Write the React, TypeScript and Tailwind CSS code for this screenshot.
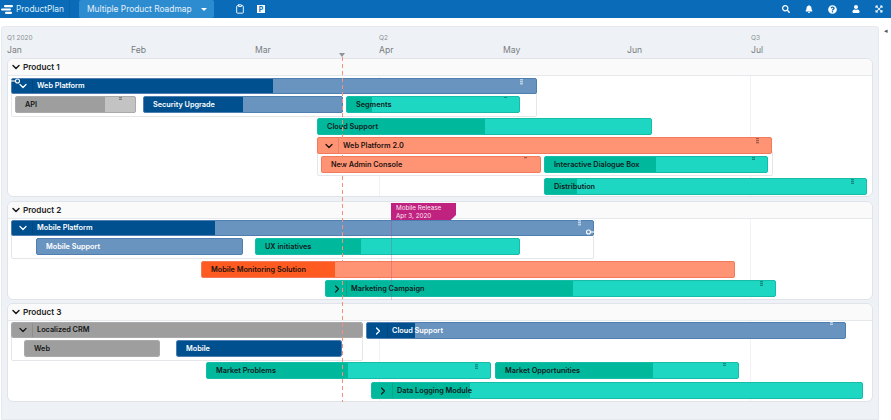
import { ChevronDown, ChevronRight, Clipboard } from "lucide-react";
import { FaBell, FaExpandArrowsAlt, FaQuestionCircle, FaSearch, FaUser } from "react-icons/fa";

type Tone = "navy" | "teal" | "orange" | "gray" | "mist";
type Toggle = "down" | "right";

interface BarData {
  label: string;
  from: number;
  to: number;
  top: number;
  height?: number;
  split?: number;
  tone: Tone;
  toggle?: Toggle;
}

interface GroupBox {
  from: number;
  to: number;
  top: number;
  bottom: number;
}

interface Grip {
  x: number;
  y: number;
  h: number;
  dark?: boolean;
}

const tones: Record<Tone, { light: string; dark: string; border: string; text: string }> = {
  navy: { light: "bg-[#6a94c0]", dark: "bg-[#00508f]", border: "border-[#4f7fb0]", text: "text-white" },
  mist: { light: "bg-[#6a94c0]", dark: "bg-[#6a94c0]", border: "border-[#4f7fb0]", text: "text-white" },
  teal: { light: "bg-[#1dd7c3]", dark: "bg-[#00b89c]", border: "border-[#15bda9]", text: "text-[#10201d]" },
  orange: { light: "bg-[#ff9474]", dark: "bg-[#ff5a1f]", border: "border-[#f4795a]", text: "text-[#1c1310]" },
  gray: { light: "bg-[#c3c3c3]", dark: "bg-[#9e9e9e]", border: "border-[#a9a9a9]", text: "text-[#161616]" },
};

const months = ["Jan", "Feb", "Mar", "Apr", "May", "Jun", "Jul"];
const quarters = ["Q1 2020", "", "", "Q2", "", "", "Q3"];

const Bar = ({ bar, originX, originY }: { bar: BarData; originX: number; originY: number }) => {
  const tone = tones[bar.tone];
  const height = bar.height ?? 17;
  const width = bar.to - bar.from;
  return (
    <div
      className={`absolute overflow-hidden rounded-[2px] border ${tone.border} ${tone.light}`}
      style={{ left: bar.from - originX, top: bar.top - originY, width, height }}
    >
      {/* split is a page x, the fill starts inside the 1px border */}
      {bar.split && (
        <div className={`h-full ${tone.dark}`} style={{ width: bar.split - bar.from - 1 }} />
      )}
      {bar.toggle && (
        <div className="absolute top-0 left-0 flex h-full w-[21px] items-center justify-center border-r border-black/10 pl-[2px]">
          {bar.toggle === "down" ? (
            <ChevronDown size={12} strokeWidth={2.5} className={tone.text} />
          ) : (
            <ChevronRight size={12} strokeWidth={2.5} className={tone.text} />
          )}
        </div>
      )}
      <span
        className={`absolute top-0 flex h-full items-center whitespace-nowrap text-[7.3px] leading-none font-semibold ${tone.text}`}
        style={{ left: bar.toggle ? 25 : 9 }}
      >
        {bar.label}
      </span>
    </div>
  );
};

const Card = ({
  title,
  top,
  height,
  className,
  groups,
  bars,
  grips,
  children,
}: {
  title: string;
  top: number;
  height: number;
  className?: string;
  groups: GroupBox[];
  bars: BarData[];
  grips: Grip[];
  children?: React.ReactNode;
}) => {
  const originX = 8;
  const originY = top + 1;
  return (
    <section
      className={`relative rounded-[6px] border border-[#e0e4e8] bg-white ${className ?? ""}`}
      style={{ height }}
    >
      <div className="flex h-[17px] items-center gap-[1.5px] rounded-t-[6px] border-b border-[#e6e9ec] bg-[#fafafa] pl-[1.5px] text-[8.2px] leading-none font-semibold text-[#1c1c1c]">
        <ChevronDown size={12} strokeWidth={3} />
        {title}
      </div>
      <div className="absolute top-[17px] bottom-0 left-[371px] w-px bg-[#f0f2f4]" />
      <div className="absolute top-[17px] bottom-0 left-[742px] w-px bg-[#f0f2f4]" />
      {groups.map((g) => (
        <div
          key={`${g.from}-${g.top}`}
          className="absolute rounded-[2px] border border-[#e4e6e9] bg-white"
          style={{ left: g.from - originX, top: g.top - originY, width: g.to - g.from, height: g.bottom - g.top }}
        />
      ))}
      {bars.map((b) => (
        <Bar key={b.label + b.from} bar={b} originX={originX} originY={originY} />
      ))}
      {grips.map((g) => (
        <div
          key={`${g.x}-${g.y}`}
          className={`absolute w-[3px] ${
            g.dark
              ? "bg-[repeating-linear-gradient(to_bottom,rgba(0,0,0,0.35)_0,rgba(0,0,0,0.35)_1px,rgba(0,0,0,0.12)_1px,rgba(0,0,0,0.12)_2px)]"
              : "bg-[repeating-linear-gradient(to_bottom,rgba(255,255,255,0.55)_0,rgba(255,255,255,0.55)_1px,rgba(255,255,255,0.25)_1px,rgba(255,255,255,0.25)_2px)]"
          }`}
          style={{ left: g.x - originX, top: g.y - originY, height: g.h }}
        />
      ))}
      {children}
    </section>
  );
};

const KeyMark = ({ className, flip }: { className: string; flip?: boolean }) => (
  <svg width="10" height="6" viewBox="0 0 10 6" className={`absolute ${className} ${flip ? "-scale-x-100" : ""}`}>
    <circle cx="6.5" cy="3" r="2" fill="none" stroke="white" strokeWidth="1.1" />
    <path d="M0 3h4.5" stroke="white" strokeWidth="1.1" />
  </svg>
);

export default function App() {
  return (
    <div className="relative h-[420px] w-[891px] overflow-hidden bg-white font-['Inter',sans-serif]">
      <header className="flex h-[18px] items-center bg-[#0a6cb8] text-white">
        <div className="flex h-full w-[70px] items-center gap-[3px] border-r border-[#0a62a8] pl-[1px]">
          <svg width="12" height="9" viewBox="0 0 12 9" fill="white">
            <rect x="3" y="0" width="9" height="2.2" rx="1" />
            <rect x="0" y="3.4" width="10" height="2.2" rx="1" />
            <rect x="4" y="6.8" width="7" height="2.2" rx="1" />
          </svg>
          <span className="text-[8.4px] text-[#dcecf8]">ProductPlan</span>
        </div>
        <div className="ml-[9px] flex h-full w-[135px] items-center justify-between rounded-[2px] bg-[#2d8ccf] pr-[7px] pl-[8px] text-[8.4px] text-[#e3f0fa]">
          Multiple Product Roadmap
          <span className="h-0 w-0 border-x-[3px] border-t-[3px] border-x-transparent border-t-white" />
        </div>
        <Clipboard size={10} strokeWidth={2.2} className="ml-[21px]" />
        <span className="ml-[12px] flex h-[8px] w-[8px] items-center justify-center bg-white text-[7px] leading-none font-bold text-[#0a6cb8]">
          P
        </span>
        <div className="ml-auto flex items-center gap-[15px] pr-[8px]">
          <FaSearch size={8} />
          <FaBell size={8} />
          <FaQuestionCircle size={9} />
          <FaUser size={8} />
          <FaExpandArrowsAlt size={8} />
        </div>
      </header>

      <span className="absolute top-[26px] left-[884px] text-[7px] leading-[10px] text-[#555]">◂</span>

      <main className="relative mt-[8px] ml-[1px] h-[394px] w-[878px] rounded-t-[3px] border border-[#e6e9ed] bg-[#eef1f5] px-[5px]">
        <div className="grid h-[31px] grid-cols-[repeat(7,124px)] pt-[6px]">
          {months.map((m, i) => (
            <div key={m} className="flex flex-col">
              <span className="h-[10px] text-[6.5px] leading-[10px] text-[#8a8f94]">{quarters[i]}</span>
              <span className="text-[8.6px] leading-[14px] text-[#777c80]">{m}</span>
            </div>
          ))}
        </div>

        <Card
          title="Product 1"
          top={58}
          height={139}
          groups={[
            { from: 11, to: 537, top: 90, bottom: 117 },
            { from: 317, to: 773, top: 150, bottom: 176 },
          ]}
          bars={[
            { label: "Web Platform", from: 11, to: 537, top: 78, height: 16, split: 273, tone: "navy", toggle: "down" },
            { label: "API", from: 15, to: 136, top: 96, split: 105, tone: "gray" },
            { label: "Security Upgrade", from: 143, to: 343, top: 96, split: 243, tone: "navy" },
            { label: "Segments", from: 346, to: 520, top: 96, split: 372, tone: "teal" },
            { label: "Cloud Support", from: 317, to: 652, top: 118, split: 485, tone: "teal" },
            { label: "Web Platform 2.0", from: 317, to: 772, top: 137, tone: "orange", toggle: "down" },
            { label: "New Admin Console", from: 321, to: 541, top: 156, tone: "orange" },
            { label: "Interactive Dialogue Box", from: 544, to: 768, top: 156, split: 656, tone: "teal" },
            { label: "Distribution", from: 544, to: 867, top: 178, split: 577, tone: "teal" },
          ]}
          grips={[
            { x: 520, y: 79, h: 6 },
            { x: 119, y: 97, h: 3, dark: true },
            { x: 504, y: 97, h: 1, dark: true },
            { x: 524, y: 157, h: 2, dark: true },
            { x: 752, y: 157, h: 3, dark: true },
            { x: 756, y: 138, h: 6, dark: true },
            { x: 851, y: 179, h: 5, dark: true },
          ]}
        >
          <KeyMark className="top-[19px] left-[3px]" />
        </Card>

        <Card
          title="Product 2"
          top={201}
          height={99}
          className="mt-[4px]"
          groups={[{ from: 11, to: 594, top: 232, bottom: 259 }]}
          bars={[
            { label: "Mobile Platform", from: 11, to: 594, top: 220, height: 16, split: 215, tone: "navy", toggle: "down" },
            { label: "Mobile Support", from: 36, to: 243, top: 238, tone: "mist" },
            { label: "UX initiatives", from: 255, to: 520, top: 238, split: 361, tone: "teal" },
            { label: "Mobile Monitoring Solution", from: 201, to: 735, top: 261, split: 335, tone: "orange" },
            { label: "Marketing Campaign", from: 325, to: 776, top: 280, split: 573, tone: "teal", toggle: "right" },
          ]}
          grips={[
            { x: 578, y: 220, h: 6 },
            { x: 760, y: 281, h: 5, dark: true },
          ]}
        >
          <KeyMark className="top-[27px] left-[577px]" flip />
          <div className="absolute top-[1px] left-[383px] h-[97px] w-px bg-[#c0237f]/25" />
          <div className="absolute top-[1px] left-[383px] flex h-[17px] w-[65px] flex-col justify-center bg-[#c0237f] pl-[5px] text-[6.3px] leading-[8px] text-[#fbe6f2] [clip-path:polygon(0_0,100%_0,100%_70%,92%_100%,0_100%)]">
            <span>Mobile Release</span>
            <span>Apr 3, 2020</span>
          </div>
        </Card>

        <Card
          title="Product 3"
          top={303}
          height={99}
          className="mt-[3px]"
          groups={[{ from: 11, to: 363, top: 334, bottom: 361 }]}
          bars={[
            { label: "Localized CRM", from: 11, to: 363, top: 322, height: 16, split: 363, tone: "gray", toggle: "down" },
            { label: "Cloud Support", from: 366, to: 846, top: 322, split: 415, tone: "navy", toggle: "right" },
            { label: "Web", from: 24, to: 160, top: 340, split: 161, tone: "gray" },
            { label: "Mobile", from: 176, to: 342, top: 340, split: 343, tone: "navy" },
            { label: "Market Problems", from: 206, to: 491, top: 362, split: 348, tone: "teal" },
            { label: "Market Opportunities", from: 495, to: 739, top: 362, split: 653, tone: "teal" },
            { label: "Data Logging Module", from: 371, to: 863, top: 382, split: 470, tone: "teal", toggle: "right" },
          ]}
          grips={[
            { x: 830, y: 322, h: 3 },
            { x: 475, y: 364, h: 5, dark: true },
            { x: 723, y: 363, h: 3, dark: true },
          ]}
        />

        <span className="absolute top-[26px] left-[337px] h-0 w-0 border-x-[3px] border-t-[4px] border-x-transparent border-t-[#8f9498]" />
        <div className="absolute top-[30px] left-[340px] h-[345px] w-px bg-[repeating-linear-gradient(to_bottom,#f78f7a_0,#f78f7a_4px,transparent_4px,transparent_7px)]" />
      </main>
    </div>
  );
}
